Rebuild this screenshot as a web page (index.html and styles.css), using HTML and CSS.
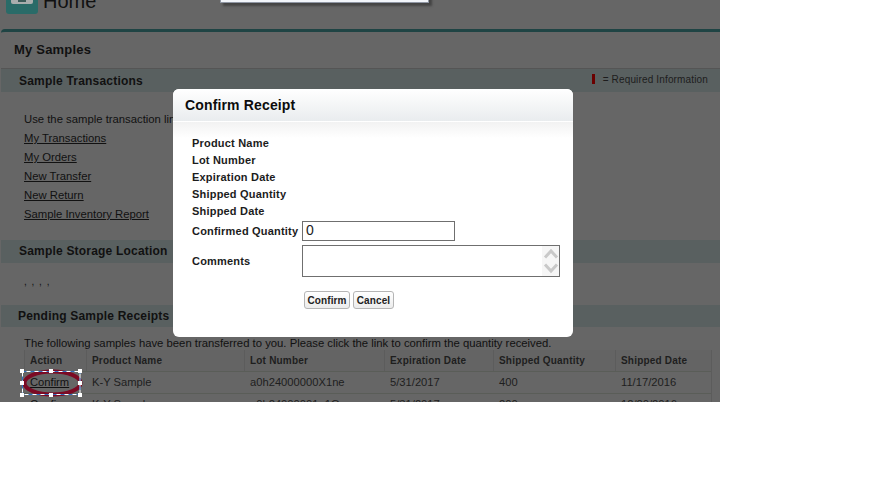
FILE: index.html
```html
<!DOCTYPE html>
<html lang="en">
<head>
<meta charset="utf-8">
<title>My Samples</title>
<link rel="stylesheet" href="styles.css">
</head>
<body>
<div class="shot">
  <header class="top">
    <div class="home-icon"><span class="home-glyph"><span class="home-inner"></span></span></div>
    <div class="home-title">Home</div>
  </header>
  <div class="top-popup"></div>
  <main class="panel">
    <h1 class="panel-title">My Samples</h1>
    <section class="bar bar-first">
      <h2>Sample Transactions</h2>
      <div class="req"><span class="req-mark"></span><span>= Required Information</span></div>
    </section>
    <div class="links">
      <p>Use the sample transaction links below to manage your samples.</p>
      <a href="#">My Transactions</a>
      <a href="#">My Orders</a>
      <a href="#">New Transfer</a>
      <a href="#">New Return</a>
      <a href="#">Sample Inventory Report</a>
    </div>
    <section class="bar bar-storage"><h2>Sample Storage Location</h2></section>
    <div class="dots">, , , ,</div>
    <section class="bar bar-pending"><h2>Pending Sample Receipts</h2></section>
    <p class="intro">The following samples have been transferred to you. Please click the link to confirm the quantity received.</p>
    <div class="table">
      <div class="row head">
        <div>Action</div><div>Product Name</div><div>Lot Number</div><div>Expiration Date</div><div>Shipped Quantity</div><div>Shipped Date</div>
      </div>
      <div class="row">
        <div><a href="#">Confirm</a></div><div>K-Y Sample</div><div>a0h24000000X1ne</div><div>5/31/2017</div><div>400</div><div>11/17/2016</div>
      </div>
      <div class="row">
        <div><a href="#">Confirm</a></div><div>K-Y Sample</div><div>a0h24000001o1Q</div><div>5/31/2017</div><div>200</div><div>12/20/2016</div>
      </div>
    </div>
  </main>
  <svg class="mark" width="66" height="30" viewBox="0 0 66 30">
    <ellipse cx="33.5" cy="14" rx="28" ry="11.5" fill="none" stroke="#7b0a24" stroke-width="4"/>
    <rect x="3.5" y="2.5" width="57.5" height="23" fill="none" stroke="#fff" stroke-width="1"/>
    <rect x="3.5" y="2.5" width="57.5" height="23" fill="none" stroke="#2f6fc0" stroke-width="1" stroke-dasharray="4 4"/>
    <g fill="#fff">
      <rect x="1" y="0" width="4" height="4"/><rect x="30" y="0" width="4" height="4"/><rect x="59" y="0" width="4" height="4"/>
      <rect x="1" y="12" width="4" height="4"/><rect x="59" y="12" width="4" height="4"/>
      <rect x="1" y="24" width="4" height="4"/><rect x="30" y="24" width="4" height="4"/><rect x="59" y="24" width="4" height="4"/>
    </g>
  </svg>
</div>
<div class="dialog">
  <div class="dialog-head">Confirm Receipt</div>
  <div class="dialog-body">
    <div class="field">Product Name</div>
    <div class="field">Lot Number</div>
    <div class="field">Expiration Date</div>
    <div class="field">Shipped Quantity</div>
    <div class="field">Shipped Date</div>
    <div class="field-row qty"><label>Confirmed Quantity</label><div class="input">0</div></div>
    <div class="field-row comments"><label>Comments</label>
      <div class="textarea">
        <div class="scroll">
          <svg width="16" height="12" viewBox="0 0 16 12"><path d="M2 9.5 8 3l6 6.5" fill="none" stroke="#c9c9c9" stroke-width="3"/></svg>
          <svg width="16" height="12" viewBox="0 0 16 12"><path d="M2 2.5 8 9l6-6.5" fill="none" stroke="#c9c9c9" stroke-width="3"/></svg>
        </div>
      </div>
    </div>
    <div class="actions"><button type="button">Confirm</button><button type="button">Cancel</button></div>
  </div>
</div>
</body>
</html>
```
FILE: styles.css
```css
* { box-sizing: border-box; }
html, body { margin: 0; padding: 0; background: #fff; }
body { width: 873px; height: 481px; overflow: hidden; position: relative; font-family: "Liberation Sans", Arial, sans-serif; color: #111; }
.shot { width: 720px; height: 402px; overflow: hidden; background: #666; position: relative; }
.top { height: 29px; display: flex; align-items: flex-end; padding: 0 0 15px 6px; gap: 5px; }
.home-icon { width: 32px; height: 32px; flex: none; background: #2a6b68; border-radius: 3px; position: relative; }
.home-glyph { position: absolute; left: 5px; right: 5px; bottom: 10px; height: 14px; background: #a9adad; border-radius: 2px; }
.home-inner { position: absolute; left: 7px; right: 7px; bottom: 2px; height: 3px; background: #3c5a58; }
.home-title { font-size: 20px; line-height: 24px; color: #111; margin-bottom: 1px; }
.top-popup { position: absolute; left: 220px; top: -6px; width: 209px; height: 9px; background: #f2f5fa; border: 1px solid #8f96a3; box-shadow: 3px 3px 2px #444; }
.panel { border-top: 3px solid #1f4444; border-top-left-radius: 4px; margin-left: 1px; }
.panel-title { margin: 0; height: 36px; padding: 10px 0 0 13px; font-size: 13px; line-height: 15px; letter-spacing: .2px; font-weight: bold; }
.bar { background: #596060; display: flex; justify-content: space-between; align-items: center; padding: 0 12px 0 18px; }
.bar h2 { margin: 0; font-size: 12px; font-weight: bold; letter-spacing: .2px; }
.bar-first { height: 24px; border-top: 1px solid #555; }
.req { display: flex; align-items: center; gap: 8px; font-size: 10px; letter-spacing: .15px; color: #1d1d1d; margin-bottom: 3px; }
.req-mark { width: 3px; height: 10px; background: #6a0000; }
.links { height: 148px; padding: 18px 0 0 23px; font-size: 11.3px; line-height: 19px; }
.links p { margin: 0; }
.links a { display: block; color: #111; }
.bar-storage { height: 23px; padding-bottom: 1px; }
.dots { height: 42px; padding: 12px 0 0 23px; font-size: 10px; line-height: 14px; letter-spacing: 1px; }
.bar-pending { height: 22px; padding-left: 17px; }
.intro { margin: 0; padding: 9px 0 0 23px; height: 23px; font-size: 11.3px; line-height: 14px; }
.table { margin-left: 23px; width: 688px; border-right: 1px solid #5c5c5c; background: #666; }
.row { display: grid; grid-template-columns: 62px 158px 140px 109px 122px 97px; height: 22px; border-bottom: 1px solid #5a5d58; font-size: 11.2px; line-height: 21px; color: #1e1e1e; }
.row > div { padding-left: 6px; white-space: nowrap; }
.row a { color: #111; }
.head { background: #646464; font-size: 10px; font-weight: bold; letter-spacing: .2px; }
.row.head > div { border-left: 1px solid #5c5c5c; padding-left: 5px; }
.mark { position: absolute; left: 19px; top: 369px; }
.dialog { position: absolute; left: 173px; top: 89px; width: 400px; height: 248px; background: #fff; border-radius: 6px; overflow: hidden; }
.dialog-head { height: 32px; padding: 8px 0 0 12px; font-size: 14px; line-height: 17px; font-weight: bold; color: #0c0c0c; letter-spacing: .15px; background: linear-gradient(#fff, #e9ecee); }
.dialog-body { border-top: 1px solid #fff; background: linear-gradient(#f2f2f2, #fff 16px) no-repeat; padding: 13px 0 0 19px; font-size: 11px; font-weight: bold; color: #1c1c1c; letter-spacing: .2px; }
.field { height: 17px; line-height: 17px; }
.field-row { display: flex; }
.qty { height: 20px; margin-top: 1px; align-items: center; }
.qty label { width: 110px; }
.input { width: 153px; height: 20px; border: 1px solid #6f6f6f; font-size: 14px; font-weight: normal; line-height: 17px; padding-left: 3px; color: #222; }
.comments { height: 32px; margin-top: 4px; align-items: center; }
.comments label { width: 110px; }
.textarea { width: 258px; height: 32px; border: 1px solid #6f6f6f; display: flex; justify-content: flex-end; }
.scroll { width: 17px; background: #f6f6f6; display: flex; flex-direction: column; align-items: center; justify-content: center; gap: 2px; }
.actions { display: flex; gap: 3px; margin: 14px 0 0 112px; }
button { width: 46px; height: 18px; padding: 0; border: 1px solid #b5b5b5; border-radius: 3px; background: linear-gradient(#fff, #ececec); font: bold 10px "Liberation Sans", Arial, sans-serif; letter-spacing: .1px; color: #222; }
button + button { width: 41px; }
```
